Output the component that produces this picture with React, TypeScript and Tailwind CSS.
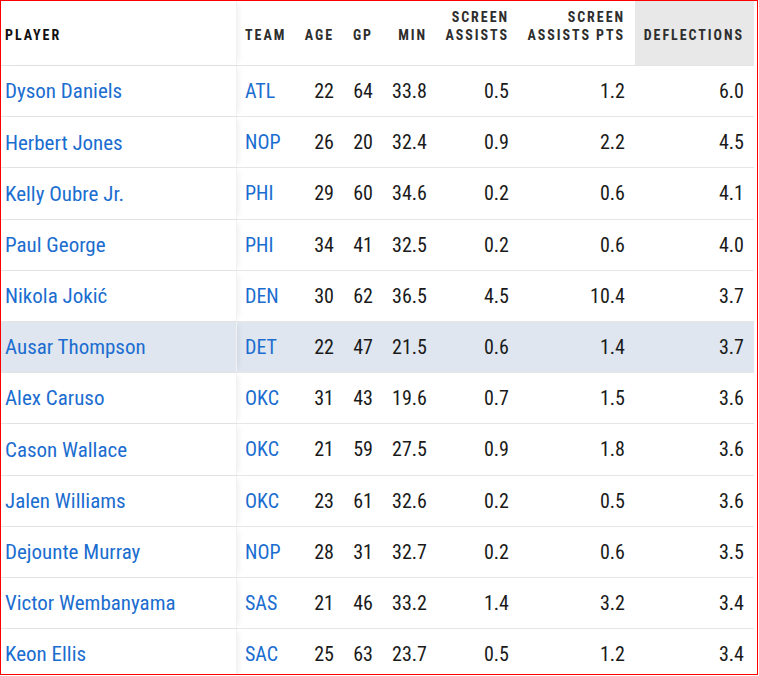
import React from "react";

type Row = { name: string; team: string; age: number; gp: number; min: string; sa: string; sap: string; def: string; hl?: boolean };

const rows: Row[] = [
  { name: "Dyson Daniels", team: "ATL", age: 22, gp: 64, min: "33.8", sa: "0.5", sap: "1.2", def: "6.0" },
  { name: "Herbert Jones", team: "NOP", age: 26, gp: 20, min: "32.4", sa: "0.9", sap: "2.2", def: "4.5" },
  { name: "Kelly Oubre Jr.", team: "PHI", age: 29, gp: 60, min: "34.6", sa: "0.2", sap: "0.6", def: "4.1" },
  { name: "Paul George", team: "PHI", age: 34, gp: 41, min: "32.5", sa: "0.2", sap: "0.6", def: "4.0" },
  { name: "Nikola Jokić", team: "DEN", age: 30, gp: 62, min: "36.5", sa: "4.5", sap: "10.4", def: "3.7" },
  { name: "Ausar Thompson", team: "DET", age: 22, gp: 47, min: "21.5", sa: "0.6", sap: "1.4", def: "3.7", hl: true },
  { name: "Alex Caruso", team: "OKC", age: 31, gp: 43, min: "19.6", sa: "0.7", sap: "1.5", def: "3.6" },
  { name: "Cason Wallace", team: "OKC", age: 21, gp: 59, min: "27.5", sa: "0.9", sap: "1.8", def: "3.6" },
  { name: "Jalen Williams", team: "OKC", age: 23, gp: 61, min: "32.6", sa: "0.2", sap: "0.5", def: "3.6" },
  { name: "Dejounte Murray", team: "NOP", age: 28, gp: 31, min: "32.7", sa: "0.2", sap: "0.6", def: "3.5" },
  { name: "Victor Wembanyama", team: "SAS", age: 21, gp: 46, min: "33.2", sa: "1.4", sap: "3.2", def: "3.4" },
  { name: "Keon Ellis", team: "SAC", age: 25, gp: 63, min: "23.7", sa: "0.5", sap: "1.2", def: "3.4" },
];

const grid = "grid grid-cols-[236px_58px_49px_39px_54px_82px_116px_119px] w-[753px]";
const hd = "flex items-end justify-end pb-[21px] pr-[10px] text-right";

export default function App() {
  return (
    <div
      className="w-[758px] h-[675px] border border-[#ff0000] overflow-hidden bg-white"
      style={{ fontFamily: "'Roboto Condensed', Roboto, 'Liberation Sans', sans-serif" }}
    >
      <div className={`${grid} h-[65px] border-b border-[#e4e4e4] text-[14px] font-bold uppercase tracking-[0.14em] leading-[18px] text-[#2e2e2e]`}>
        <div className="flex items-end pb-[21px] pl-[4px] text-[#111] shadow-[4px_0_6px_-3px_rgba(0,0,0,0.08)] border-r border-[#f2f2f2]">Player</div>
        <div className="flex items-end pb-[21px] pl-[8px]">Team</div>
        <div className={hd}>Age</div>
        <div className={hd}>GP</div>
        <div className={hd}>Min</div>
        <div className={hd}>Screen<br />Assists</div>
        <div className={hd}>Screen<br />Assists Pts</div>
        <div className={`${hd} bg-[#e8e8e8]`}>Deflections</div>
      </div>
      {rows.map((r) => (
        <div
          key={r.name}
          className={`${grid} h-[51.2px] border-b border-[#e6e6e6] text-[20px] text-[#1a1a1a] ${r.hl ? "bg-[#dfe6ef]" : ""}`}
        >
          <div className="flex items-center pl-[4px] pt-[2px] text-[21px] text-[#1b6dd0] shadow-[4px_0_6px_-3px_rgba(0,0,0,0.08)] border-r border-[#f2f2f2]">{r.name}</div>
          <div className="flex items-center pl-[8px] text-[#1b6dd0]">{r.team}</div>
          <div className="flex items-center justify-end pr-[10px]">{r.age}</div>
          <div className="flex items-center justify-end pr-[10px]">{r.gp}</div>
          <div className="flex items-center justify-end pr-[10px]">{r.min}</div>
          <div className="flex items-center justify-end pr-[10px]">{r.sa}</div>
          <div className="flex items-center justify-end pr-[10px]">{r.sap}</div>
          <div className="flex items-center justify-end pr-[10px]">{r.def}</div>
        </div>
      ))}
    </div>
  );
}
